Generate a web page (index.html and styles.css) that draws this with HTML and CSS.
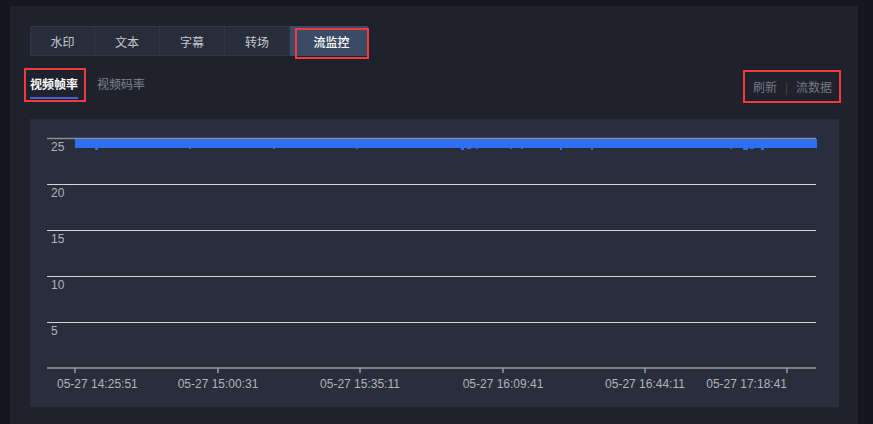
FILE: index.html
```html
<!DOCTYPE html>
<html lang="zh">
<head>
<meta charset="utf-8">
<link rel="stylesheet" href="styles.css">
</head>
<body>
<div class="panel">
  <div class="tabs">
    <div class="tab">水印</div>
    <div class="tab">文本</div>
    <div class="tab">字幕</div>
    <div class="tab">转场</div>
    <div class="tab active">流监控<span class="mark mark-tab"></span></div>
  </div>
  <div class="subbar">
    <div class="subtabs">
      <div class="subtab current">视频帧率<span class="mark mark-sub"></span></div>
      <div class="subtab">视频码率</div>
    </div>
    <div class="actions">
      <span class="act">刷新</span>
      <span class="sep">|</span>
      <span class="act">流数据</span>
      <span class="mark mark-act"></span>
    </div>
  </div>
  <div class="chart">
    <svg class="plot" width="809" height="288" viewBox="0 0 809 288">
      <g class="grid">
        <line x1="17" x2="786" y1="65.5" y2="65.5"/>
        <line x1="17" x2="786" y1="111.5" y2="111.5"/>
        <line x1="17" x2="786" y1="157.5" y2="157.5"/>
        <line x1="17" x2="786" y1="203.5" y2="203.5"/>
      </g>
      <line class="top" x1="17" x2="786" y1="19.5" y2="19.5"/>
      <g class="ylab">
        <text x="21" y="32">25</text>
        <text x="21" y="78">20</text>
        <text x="21" y="124">15</text>
        <text x="21" y="170">10</text>
        <text x="21" y="216">5</text>
      </g>
      <rect class="bar" x="45" y="20" width="742" height="9"/>
      <g class="spikes">
        <rect x="65" y="28" width="3" height="3"/>
        <rect x="159" y="28" width="2" height="2"/>
        <rect x="243" y="28" width="2" height="2"/>
        <rect x="326" y="28" width="2" height="2"/>
        <rect x="431" y="28" width="3" height="3"/>
        <rect x="437" y="28" width="4" height="2"/>
        <rect x="446" y="28" width="2" height="2"/>
        <rect x="480" y="28" width="2" height="2"/>
        <rect x="491" y="28" width="2" height="2"/>
        <rect x="530" y="28" width="2" height="3"/>
        <rect x="561" y="28" width="2" height="3"/>
        <rect x="700" y="28" width="2" height="2"/>
        <rect x="713" y="28" width="5" height="3"/>
        <rect x="720" y="28" width="4" height="2"/>
        <rect x="731" y="28" width="3" height="3"/>
      </g>
      <line class="axis" x1="17" x2="786" y1="249" y2="249"/>
      <g class="ticks">
        <line x1="45" x2="45" y1="249" y2="254"/>
        <line x1="188" x2="188" y1="249" y2="254"/>
        <line x1="330" x2="330" y1="249" y2="254"/>
        <line x1="473" x2="473" y1="249" y2="254"/>
        <line x1="615" x2="615" y1="249" y2="254"/>
        <line x1="757" x2="757" y1="249" y2="254"/>
      </g>
      <g class="xlab">
        <text x="27" y="269" text-anchor="start">05-27 14:25:51</text>
        <text x="188" y="269" text-anchor="middle">05-27 15:00:31</text>
        <text x="330" y="269" text-anchor="middle">05-27 15:35:11</text>
        <text x="473" y="269" text-anchor="middle">05-27 16:09:41</text>
        <text x="615" y="269" text-anchor="middle">05-27 16:44:11</text>
        <text x="757" y="269" text-anchor="end">05-27 17:18:41</text>
      </g>
    </svg>
  </div>
</div>
</body>
</html>
```

FILE: styles.css
```css
html, body {
  margin: 0;
  padding: 0;
  background: #15171e;
  font-family: "Noto Sans CJK SC", "Noto Sans", sans-serif;
}
body {
  padding: 6px 15px 0 10px;
  height: 424px;
  box-sizing: border-box;
  overflow: hidden;
}
.panel {
  width: 848px;
  height: 418px;
  box-sizing: border-box;
  background: #1f222c;
  padding: 20px 20px 0 20px;
  display: flex;
  flex-direction: column;
}
.tabs {
  display: flex;
  height: 30px;
}
.tab {
  position: relative;
  width: 65px;
  height: 30px;
  box-sizing: border-box;
  background: #282d3a;
  border: 1px solid #30364a;
  border-left: none;
  color: #c4c7cf;
  font-size: 12px;
  display: flex;
  align-items: center;
  justify-content: center;
}
.tab:first-child {
  border-left: 1px solid #30364a;
}
.tab.active {
  width: 78px;
  background: #3a4b66;
  border-color: #3a4b66;
  color: #ffffff;
  font-weight: 500;
  padding-left: 6px;
}
.mark {
  position: absolute;
  border: 2.5px solid #f43a3a;
  box-sizing: border-box;
  pointer-events: none;
}
.mark-tab {
  left: 5px;
  top: 1px;
  width: 74px;
  height: 31px;
}
.subbar {
  display: flex;
  justify-content: space-between;
  align-items: flex-start;
  margin-top: 12px;
  height: 41px;
}
.subtabs {
  display: flex;
  gap: 19px;
}
.subtab {
  position: relative;
  font-size: 12px;
  color: #7f8490;
  line-height: 18px;
  margin-top: 1px;
  padding-top: 6px;
  box-sizing: border-box;
  height: 30px;
}
.subtab.current {
  color: #ffffff;
  font-weight: 700;
  border-bottom: 2px solid #4a5fd0;
}
.mark-sub {
  left: -6px;
  top: -1px;
  width: 62px;
  height: 34px;
}
.actions {
  position: relative;
  display: flex;
  align-items: center;
  gap: 8px;
  font-size: 12px;
  color: #747984;
  margin-right: -3px;
  padding: 6px 9px 0 10px;
  height: 32px;
  box-sizing: border-box;
  line-height: 20px;
}
.sep {
  color: #4d525e;
  font-size: 11px;
}
.mark-act {
  left: 0;
  top: 2px;
  width: 98px;
  height: 33px;
}
.chart {
  margin-top: 10px;
  width: 809px;
  height: 288px;
  background: #292e3c;
}
.plot {
  display: block;
}
.grid line {
  stroke: #d4d4d6;
  stroke-width: 1.2;
}
.top {
  stroke: #8a8d94;
  stroke-width: 1.5;
}
.axis {
  stroke: #7c7f87;
  stroke-width: 2;
}
.ticks line {
  stroke: #9a9ca2;
  stroke-width: 1.5;
}
.bar, .spikes rect {
  fill: #2f70f3;
}
.ylab text, .xlab text {
  font-family: "Liberation Sans", Arial, sans-serif;
  font-size: 12px;
  fill: #b2b3b8;
}
```
